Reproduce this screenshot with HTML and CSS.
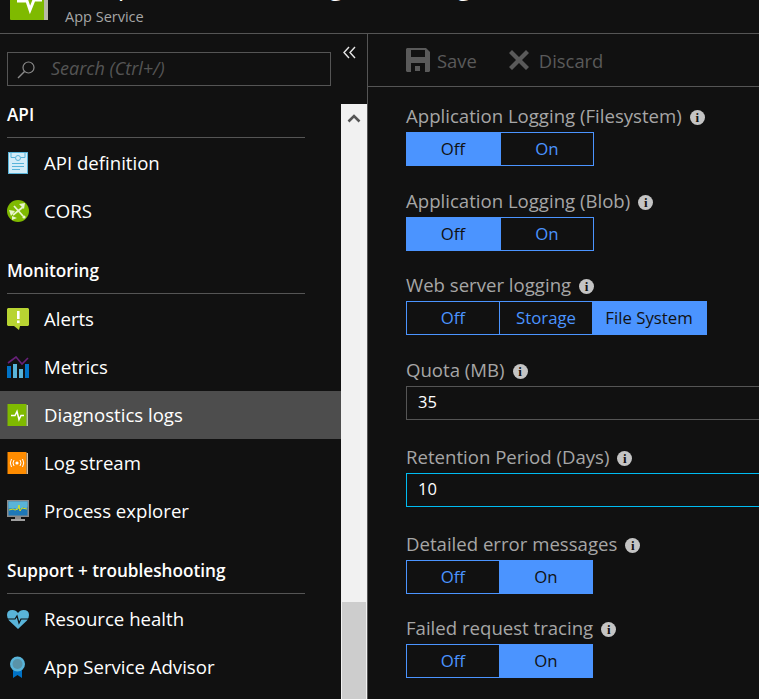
FILE: index.html
```html
<!DOCTYPE html>
<html lang="en">
<head>
    <meta charset="UTF-8">
    <meta name="viewport" content="width=device-width, initial-scale=1.0">
    <title>Diagnostics logs</title>
    <link rel="stylesheet" href="styles.css">
</head>
<body>
    <header class="blade-header">
        <svg class="blade-icon" width="38" height="38" viewBox="0 0 38 38">
            <rect x="0" y="0" width="36" height="38" rx="1" fill="#7fba00"/>
            <rect x="34" y="2" width="4" height="36" fill="#b8b8a8"/>
            <path d="M7 19h10l3 9 4-10h8" fill="none" stroke="#fff" stroke-width="3"/>
        </svg>
        <div class="blade-titles">
            <h1 class="blade-title">Sample websites - Diagnostics logs</h1>
            <div class="blade-sub">App Service</div>
        </div>
    </header>

    <div class="blade-body">
        <aside class="sidebar">
            <div class="sidebar-top">
                <div class="search">
                    <svg width="19" height="19" viewBox="0 0 19 19">
                        <circle cx="11.5" cy="7.5" r="5.5" fill="none" stroke="#8a8a8a" stroke-width="1.2"/>
                        <path d="M7.5 11.5L1 18" stroke="#8a8a8a" stroke-width="1.4"/>
                    </svg>
                    <span class="search-text">Search (Ctrl+/)</span>
                </div>
                <svg class="collapse" width="13" height="13" viewBox="0 0 13 13">
                    <path d="M6 1L1 6.5 6 12M12 1L7 6.5 12 12" fill="none" stroke="#e6e6e6" stroke-width="1.4"/>
                </svg>
            </div>

            <div class="sidebar-scroll">
                <nav class="nav">
                    <h2 class="nav-heading">API</h2>
                    <a class="nav-item">
                        <svg class="nav-icon" width="22" height="22" viewBox="0 0 22 22">
                            <rect x="1.5" y="0.5" width="19" height="21" fill="#d3ecf8" stroke="#59b4d9"/>
                            <path d="M4 1v4.5h4M18 1v4.5h-4" fill="none" stroke="#59b4d9"/>
                            <circle cx="11" cy="6" r="2.5" fill="none" stroke="#59b4d9"/>
                            <path d="M5 11.5h12M5 14.5h12M5 17.5h8" stroke="#59b4d9"/>
                        </svg>
                        <span>API definition</span>
                    </a>
                    <a class="nav-item">
                        <svg class="nav-icon" width="22" height="22" viewBox="0 0 22 22">
                            <circle cx="11" cy="11" r="11" fill="#7fba00"/>
                            <path d="M6 15L16 7M7 6l9 10" stroke="#e8f4cc" stroke-width="1.8"/>
                            <path d="M12 4l6-1-1 6zM2 10l6 1-4 5zM5 16l5 2-5 2z" fill="#e8f4cc"/>
                            <circle cx="17" cy="17" r="1.6" fill="#e8f4cc"/>
                        </svg>
                        <span>CORS</span>
                    </a>

                    <h2 class="nav-heading nav-heading-gap">Monitoring</h2>
                    <a class="nav-item">
                        <svg class="nav-icon" width="22" height="22" viewBox="0 0 22 22">
                            <path d="M1 0h20l1 1v16l-1 1h-8l-1 4-5-4H1l-1-1V1z" fill="#b8d432"/>
                            <rect x="10" y="3" width="2.6" height="8" fill="#fff"/>
                            <rect x="10" y="12.5" width="2.6" height="2.6" fill="#fff"/>
                        </svg>
                        <span>Alerts</span>
                    </a>
                    <a class="nav-item">
                        <svg class="nav-icon" width="22" height="22" viewBox="0 0 22 22">
                            <rect x="0" y="10" width="4" height="12" fill="#0072c6"/>
                            <rect x="6" y="8" width="4" height="14" fill="#59b4d9"/>
                            <rect x="12" y="13" width="4" height="9" fill="#59b4d9"/>
                            <rect x="18" y="8" width="4" height="14" fill="#0072c6"/>
                            <path d="M1 7l8-6 6 7 6-6" fill="none" stroke="#68217a" stroke-width="1.6"/>
                        </svg>
                        <span>Metrics</span>
                    </a>
                    <a class="nav-item nav-item-active">
                        <svg class="nav-icon" width="22" height="22" viewBox="0 0 22 22">
                            <rect x="0.5" y="0" width="19" height="22" fill="#7fba00"/>
                            <rect x="19.5" y="1" width="1.5" height="21" fill="#b9c9a0"/>
                            <path d="M4 11.5h4l2-4 2 8 2-4h3" fill="none" stroke="#fff" stroke-width="1.5"/>
                        </svg>
                        <span>Diagnostics logs</span>
                    </a>
                    <a class="nav-item">
                        <svg class="nav-icon" width="22" height="22" viewBox="0 0 22 22">
                            <rect x="0.5" y="0" width="19" height="22" fill="#ff8c00"/>
                            <rect x="19.5" y="1" width="1.5" height="21" fill="#d8c0a0"/>
                            <circle cx="10" cy="11" r="1.6" fill="#fff"/>
                            <path d="M7 8q-2 3 0 6M13 8q2 3 0 6M4.5 7q-2.500 4 0 8M15.500 7q2.500 4 0 8" fill="none" stroke="#fff" stroke-width="1"/>
                        </svg>
                        <span>Log stream</span>
                    </a>
                    <a class="nav-item">
                        <svg class="nav-icon" width="22" height="22" viewBox="0 0 22 22">
                            <rect x="0" y="0" width="22" height="17" fill="#8a8a8a"/>
                            <rect x="1.500" y="1.500" width="19" height="14" fill="#1e78b8"/>
                            <path d="M1.500 1.500h19v5l-1 2-3-1-2 1h-4l-1 1-1-1H1.500z" fill="#59b4d9"/>
                            <path d="M2 10l4-1 2 1 3-1 1-4 1 6 2-3 5 1" fill="none" stroke="#d8e020" stroke-width="1"/>
                            <rect x="8" y="17" width="6" height="2" fill="#8a8a8a"/>
                            <rect x="4" y="19" width="14" height="2" fill="#a0a0a0"/>
                        </svg>
                        <span>Process explorer</span>
                    </a>

                    <h2 class="nav-heading nav-heading-gap">Support + troubleshooting</h2>
                    <a class="nav-item">
                        <svg class="nav-icon" width="22" height="22" viewBox="0 0 22 22">
                            <path d="M11 21L2 12.500Q0 10 0 7 0 2 5.500 2 9 2 11 5 13 2 16.500 2 22 2 22 7 22 10 20 12.500z" fill="#59b4d9"/>
                            <path d="M0 11h8l2-3 2 7 2-4h8" fill="none" stroke="#111" stroke-width="1.200"/>
                        </svg>
                        <span>Resource health</span>
                    </a>
                    <a class="nav-item">
                        <svg class="nav-icon" width="22" height="22" viewBox="0 0 22 22">
                            <path d="M6 13h9v9l-4.500-3L6 22z" fill="#0072c6"/>
                            <circle cx="10.500" cy="8" r="7.500" fill="#59b4d9"/>
                            <circle cx="10.500" cy="8" r="5" fill="#5a93a8"/>
                        </svg>
                        <span>App Service Advisor</span>
                    </a>
                </nav>

                <div class="scrollbar">
                    <svg class="scroll-up" width="14" height="9" viewBox="0 0 14 9">
                        <path d="M1.500 7.500L7 2l5.500 5.500" fill="none" stroke="#555" stroke-width="2.600"/>
                    </svg>
                    <div class="scroll-thumb"></div>
                </div>
            </div>
        </aside>

        <main class="content">
            <div class="toolbar">
                <button class="tool-btn">
                    <svg width="24" height="24" viewBox="0 0 24 24">
                        <path fill-rule="evenodd" d="M1 0h19l4 4v19l-1 1H1l-1-1V1zM5 2v7h14V2zM5 15v9h14v-9z" fill="#5a5a5a"/>
                        <rect x="9" y="18" width="5" height="5" fill="#5a5a5a"/>
                    </svg>
                    <span>Save</span>
                </button>
                <button class="tool-btn tool-btn-discard">
                    <svg width="22" height="22" viewBox="0 0 22 22">
                        <path d="M4 1l7 7 7-7 3 3-7 7 7 7-3 3-7-7-7 7-3-3 7-7-7-7z" fill="#5a5a5a"/>
                    </svg>
                    <span>Discard</span>
                </button>
            </div>

            <div class="form">
                <div class="field">
                    <label class="field-label">Application Logging (Filesystem) <i class="info">i</i></label>
                    <div class="toggle">
                        <span class="seg seg-on seg-wide">Off</span>
                        <span class="seg">On</span>
                    </div>
                </div>
                <div class="field field-tight">
                    <label class="field-label">Application Logging (Blob) <i class="info">i</i></label>
                    <div class="toggle">
                        <span class="seg seg-on seg-wide">Off</span>
                        <span class="seg">On</span>
                    </div>
                </div>
                <div class="field">
                    <label class="field-label">Web server logging <i class="info">i</i></label>
                    <div class="toggle">
                        <span class="seg">Off</span>
                        <span class="seg seg-split">Storage</span>
                        <span class="seg seg-on seg-long">File System</span>
                    </div>
                </div>
                <div class="field field-input">
                    <label class="field-label">Quota (MB) <i class="info">i</i></label>
                    <div class="textbox">35</div>
                </div>
                <div class="field field-input">
                    <label class="field-label">Retention Period (Days) <i class="info">i</i></label>
                    <div class="textbox textbox-focus">10</div>
                </div>
                <div class="field field-tight">
                    <label class="field-label">Detailed error messages <i class="info">i</i></label>
                    <div class="toggle">
                        <span class="seg">Off</span>
                        <span class="seg seg-on seg-split">On</span>
                    </div>
                </div>
                <div class="field">
                    <label class="field-label">Failed request tracing <i class="info">i</i></label>
                    <div class="toggle">
                        <span class="seg">Off</span>
                        <span class="seg seg-on seg-split">On</span>
                    </div>
                </div>
            </div>
        </main>
    </div>
</body>
</html>
```

FILE: styles.css
```css
html, body {
    height: 100%;
}

body {
    margin: 0;
    overflow: hidden;
    background: #111;
    color: #fff;
    font-family: 'Open Sans', 'Noto Sans', sans-serif;
    font-size: 18px;
}

.blade-header {
    height: 33px;
    border-bottom: 1px solid #555;
    display: flex;
    align-items: flex-end;
    overflow: hidden;
    padding-left: 10px;
}

.blade-icon {
    flex: none;
    margin-bottom: 13px;
}

.blade-titles {
    margin-left: 17px;
    display: flex;
    flex-direction: column;
}

.blade-title {
    margin: 0 0 7px;
    font-size: 26px;
    font-weight: 400;
    line-height: 30px;
    white-space: nowrap;
}

.blade-sub {
    font-size: 14.5px;
    line-height: 20px;
    padding-bottom: 6px;
    color: #a6a6a6;
}

.blade-body {
    display: flex;
    height: 665px;
}

.sidebar {
    flex: none;
    width: 367px;
    border-right: 1px solid #555;
    display: flex;
    flex-direction: column;
}

.sidebar-top {
    height: 70px;
    flex: none;
    box-sizing: border-box;
    padding: 18px 0 0 7px;
    display: flex;
    align-items: flex-start;
}

.search {
    width: 324px;
    height: 34px;
    box-sizing: border-box;
    border: 1px solid #555;
    display: flex;
    align-items: center;
    padding-left: 9px;
    gap: 15px;
}

.search-text {
    font-size: 18px;
    font-style: italic;
    color: #555;
    line-height: 30px;
    margin-top: -3px;
}

.collapse {
    margin: -6px 0 0 12px;
}

.sidebar-scroll {
    flex: 1;
    display: flex;
    min-height: 0;
}

.nav {
    width: 341px;
    flex: none;
}

.nav-heading {
    margin: 0 36px 1px 7px;
    height: 33px;
    border-bottom: 1px solid #555;
    font-size: 17.2px;
    font-weight: 600;
    line-height: 22px;
    white-space: nowrap;
}

.nav-heading-gap {
    margin-top: 25px;
}

.nav-item {
    display: flex;
    align-items: center;
    height: 48px;
    padding-left: 7px;
    white-space: nowrap;
    color: #fff;
    font-size: 18.6px;
    line-height: 24px;
}

.nav-item-active {
    background: #4d4d4d;
}

.nav-icon {
    flex: none;
    margin-right: 15px;
}

.scrollbar {
    width: 26px;
    flex: none;
    background: #f1f1f1;
    display: flex;
    flex-direction: column;
    align-items: center;
}

.scroll-up {
    margin-top: 10px;
}

.scroll-thumb {
    margin-top: auto;
    width: 24px;
    height: 97px;
    background: #cdcdcd;
}

.content {
    flex: 1;
    min-width: 0;
    overflow: hidden;
}

.toolbar {
    height: 52px;
    border-bottom: 1px solid #555;
    display: flex;
    align-items: center;
    padding-left: 38px;
}

.tool-btn {
    display: flex;
    align-items: center;
    gap: 7px;
    padding: 0;
    border: 0;
    background: none;
    color: #5a5a5a;
    font: inherit;
    font-size: 18.4px;
}

.tool-btn-discard {
    margin-left: 31px;
    gap: 9px;
}

.form {
    padding: 17px 0 0 38px;
}

.field {
    margin-bottom: 23px;
}

.field-tight {
    margin-bottom: 22px;
}

.field-input {
    margin-bottom: 25px;
}

.field-label {
    display: flex;
    align-items: center;
    gap: 8px;
    height: 22px;
    margin-bottom: 6px;
    color: #a6a6a6;
    font-size: 18.6px;
    white-space: nowrap;
}

.info {
    width: 15px;
    height: 15px;
    margin-top: 5px;
    border-radius: 50%;
    background: #c4c4c4;
    color: #111;
    font-family: 'Liberation Serif', serif;
    font-size: 13px;
    font-style: normal;
    font-weight: bold;
    line-height: 15px;
    text-align: center;
}

.toggle {
    display: inline-flex;
    height: 34px;
    box-sizing: border-box;
    border: 1px solid #4b94ff;
    vertical-align: top;
}

.seg {
    width: 92px;
    box-sizing: border-box;
    display: flex;
    align-items: center;
    justify-content: center;
    padding-bottom: 1px;
    color: #4b94ff;
    font-size: 16.8px;
}

.seg-split {
    border-left: 1px solid #4b94ff;
    width: 93px;
}

.seg-on {
    background: #4b94ff;
    color: #111;
}

.seg-wide {
    width: 94px;
    padding-right: 2px;
}

.seg-long {
    width: 114px;
}

.textbox {
    width: 500px;
    height: 34px;
    box-sizing: border-box;
    border: 1px solid #555;
    display: flex;
    align-items: center;
    padding: 0 0 3px 11px;
    font-size: 16.5px;
}

.textbox-focus {
    border-color: #00bcf2;
}
```
